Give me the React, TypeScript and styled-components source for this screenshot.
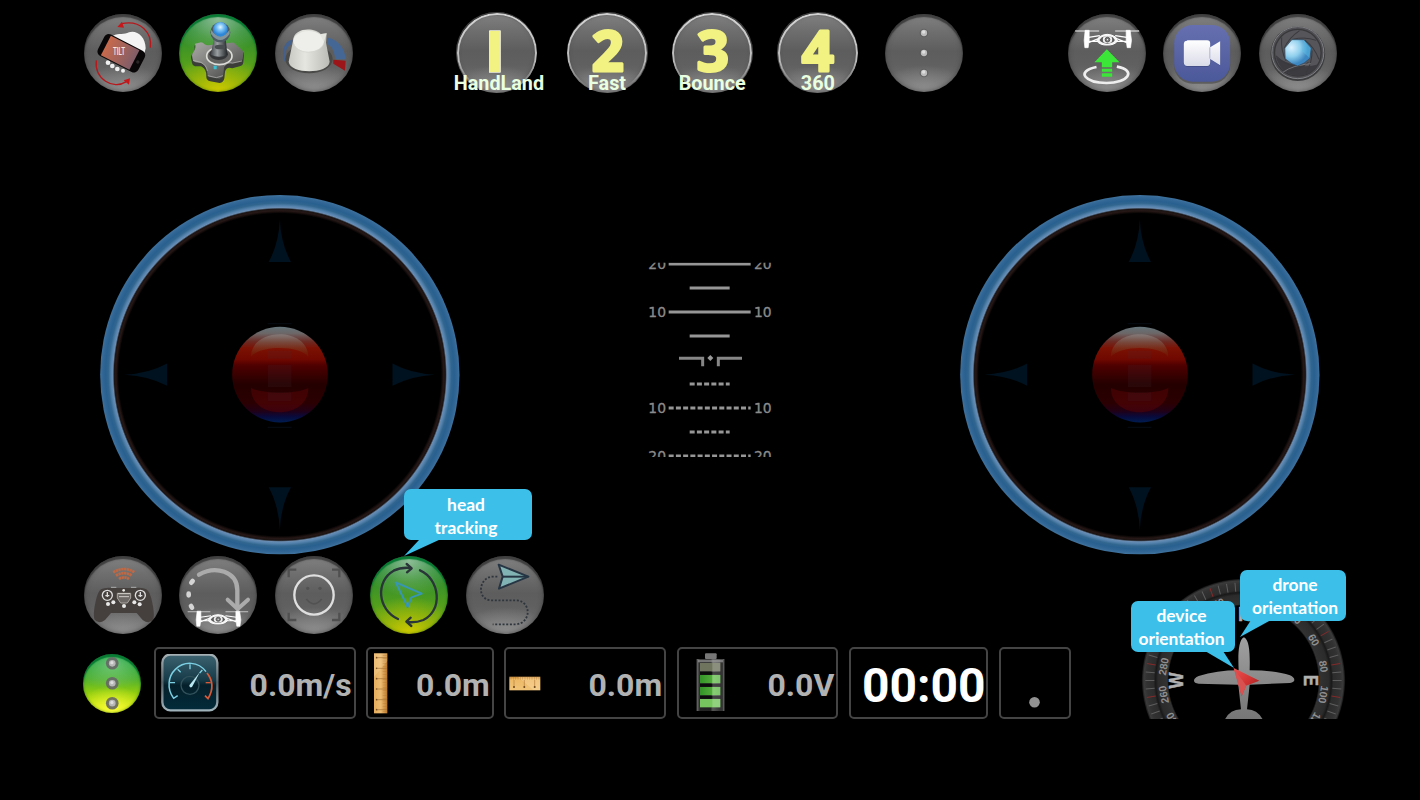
import React from "react";
import styled, { createGlobalStyle } from "styled-components";

const GlobalStyle = createGlobalStyle`
  * { box-sizing: border-box; }
  html, body { margin: 0; padding: 0; background: #000; overflow: hidden; }
`;

/* ---------- layout ---------- */

const Screen = styled.main`
  position: relative;
  display: flex;
  flex-direction: column;
  width: 1420px;
  height: 800px;
  overflow: hidden;
  background: #000;
  font-family: Roboto, "Liberation Sans", sans-serif;
`;

const TopBar = styled.header`
  display: grid;
  grid-template-columns: 372.5px 611.6px 1fr;
  height: 195px;
  padding: 13.7px 0 0 83.5px;
  flex: none;
`;

const OrbRow = styled.div<{ $indent?: number }>`
  display: flex;
  align-items: flex-start;
  gap: 17.5px;
  margin-left: ${(p) => p.$indent ?? 0}px;
`;

const PresetRow = styled(OrbRow)`
  gap: 24.4px;
`;

const Sticks = styled.section`
  display: flex;
  justify-content: space-between;
  align-items: flex-start;
  height: 361px;
  padding: 0 100px;
  flex: none;
`;

const AttitudeSlot = styled.div`
  padding-top: 55px;
`;

const Bottom = styled.section`
  display: flex;
  align-items: flex-start;
`;

const Controls = styled.div`
  display: flex;
  flex-direction: column;
  width: 1037.5px;
  margin-left: 82.5px;
  margin-top: -0.3px;
  gap: 13.6px;
`;

const StatusRow = styled.div`
  display: flex;
  align-items: center;
  gap: 10.6px;
`;

const CompassSlot = styled.div`
  padding-top: 4px;
`;

/* ---------- parts ---------- */

type Tone = "grey" | "green" | "lime";

const fills: Record<Tone, string> = {
  grey: `radial-gradient(ellipse 60% 34% at 50% 100%, #909090 0%, rgba(130,130,130,0) 100%),
    linear-gradient(180deg, #828282 0%, #6f6f6f 22%, #5d5d5d 48%, #606060 65%, #777 100%)`,
  green: `radial-gradient(ellipse 62% 46% at 50% 6%, rgba(185,210,185,.75) 0%, rgba(140,190,130,.35) 60%, rgba(120,180,90,0) 100%),
    radial-gradient(ellipse 62% 48% at 50% 100%, #d0cb00 0%, rgba(190,195,0,.6) 45%, rgba(150,190,0,0) 100%),
    linear-gradient(180deg, #0a7c38 0%, #3a9228 38%, #55a01c 65%, #80aa10 100%)`,
  lime: `radial-gradient(ellipse 60% 42% at 50% 18%, rgba(160,220,160,.6) 0%, rgba(150,210,140,0) 100%),
    radial-gradient(ellipse 60% 42% at 50% 96%, #fbff3a 0%, rgba(220,235,10,0) 100%),
    linear-gradient(180deg, #009838 0%, #4fb030 42%, #8fcc10 65%, #d8e800 100%)`,
};

const Orb = styled.div<{ $tone?: Tone; $size?: number; $after?: number }>`
  position: relative;
  flex: none;
  width: ${(p) => p.$size ?? 78}px;
  height: ${(p) => p.$size ?? 78}px;
  margin-right: ${(p) => p.$after ?? 0}px;
  border-radius: 50%;
  background: ${(p) => fills[p.$tone ?? "grey"]};
  box-shadow: ${(p) =>
    p.$tone === "green" || p.$tone === "lime"
      ? "inset 0 3px 1px #087a33, inset 0 0 3px rgba(0,80,20,.6)"
      : "inset 0 3px 1px rgba(50,50,50,.75), inset 0 0 5px rgba(60,60,60,.8)"};
`;

const PresetOrb = styled(Orb)`
  width: 81px;
  height: 81px;
  margin-top: -1.5px;

  &::after {
    content: "";
    position: absolute;
    inset: 0.5px;
    border-radius: 50%;
    border: 2.5px solid #d4d4d4;
    mask-image: linear-gradient(180deg, #000 0%, rgba(0, 0, 0, 0.8) 60%, transparent 95%);
  }
`;

const PresetLabel = styled.span<{ $shift: number }>`
  position: absolute;
  z-index: 1;
  left: 50%;
  top: 59.4px;
  transform: translateX(calc(-50% + ${(p) => p.$shift}px));
  font: 700 19.8px/24px Roboto, sans-serif;
  white-space: nowrap;
  color: #e9ffe0;
`;

const Icon = styled.svg`
  display: block;
  width: 100%;
  height: 100%;
  overflow: visible;
`;

const StickSvg = styled.svg`
  display: block;
  width: 360px;
  height: 360px;
`;

const Box = styled.div<{ $w: number }>`
  display: flex;
  align-items: center;
  justify-content: space-between;
  flex: none;
  width: ${(p) => p.$w}px;
  height: 72px;
  padding-right: 2px;
  border: 2px solid #444;
  border-radius: 5px;
`;

const Value = styled.span`
  padding-top: 4px;
  font: 700 32px/40px Roboto, sans-serif;
  color: #b2b2b2;
`;

const Clock = styled.span`
  width: 100%;
  padding: 5px 0 0 11px;
  text-align: center;
  font: 700 48px/60px Roboto, sans-serif;
  color: #fff;
`;

const Glyph = styled.svg<{ $w: number; $h: number; $ml?: number }>`
  display: block;
  flex: none;
  width: ${(p) => p.$w}px;
  height: ${(p) => p.$h}px;
  margin-left: ${(p) => p.$ml ?? 0}px;
`;

const Bubble = styled.div<{ $x: number; $y: number; $w: number; $pad: number }>`
  position: absolute;
  z-index: 3;
  left: ${(p) => p.$x}px;
  top: ${(p) => p.$y}px;
  width: ${(p) => p.$w}px;
  height: 51px;
  padding: ${(p) => p.$pad}px 0 0;
  border-radius: 7px;
  background: #3cc0ea;
  color: #fff;
  text-align: center;
  font: 700 17.4px/23px Lato, sans-serif;
  white-space: pre;
`;

const CalloutText = styled.div<{ $nudge: number }>`
  margin-left: ${(p) => p.$nudge * 2}px;
`;

const Tail = styled.svg`
  position: absolute;
  left: 0;
  top: 0;
  width: 1px;
  height: 1px;
  overflow: visible;
`;

/* ---------- top icons ---------- */

const TiltIcon = () => (
  <Icon viewBox="41 41 234 234">
    <g fill="none" stroke="#b8171b" strokeWidth="4">
      <path d="M240 142C246 96 210 58 154 70" />
      <path d="M78 180C72 236 128 270 168 244" />
    </g>
    <path d="M141 80l14-16 6 18zM179 234l-3 19-16-13z" fill="#c8171b" />
    <path d="M128 106c18-8 34-2 48-10 22-8 50 12 50 48l-4 16-96-46z" fill="#f4f4f4" />
    <g fill="#f0f0f0">
      <circle cx="113" cy="187" r="7" /><circle cx="126" cy="197" r="7" />
      <circle cx="141" cy="206" r="7" /><circle cx="158" cy="211" r="6" />
    </g>
    <g transform="rotate(27 153 159)">
      <rect x="85" y="123" width="136" height="72" rx="15" fill="#090607" />
      <rect x="101" y="126" width="96" height="66" fill="url(#tiltScreen)" />
      <circle cx="209" cy="160" r="5" fill="#292425" />
    </g>
    <defs>
      <linearGradient id="tiltScreen"><stop stopColor="#c76a4c" /><stop offset="1" stopColor="#805d68" /></linearGradient>
    </defs>
    <text x="146" y="165" textAnchor="middle" textLength="36" lengthAdjust="spacingAndGlyphs" fontFamily="Roboto" fontWeight="500" fontSize="30" fill="#f6eae4">TILT</text>
  </Icon>
);

const JoystickIcon = () => (
  <Icon viewBox="328 41 234 234">
    <defs>
      <linearGradient id="metal" x2="1" y2="1"><stop stopColor="#a9a9a6" /><stop offset=".45" stopColor="#7d7d7b" /><stop offset="1" stopColor="#3e3e3d" /></linearGradient>
      <linearGradient id="shaft"><stop stopColor="#3c4145" /><stop offset=".4" stopColor="#9a9fa2" /><stop offset="1" stopColor="#222628" /></linearGradient>
      <radialGradient id="knob" cx=".5" cy=".35"><stop stopColor="#e4f6ff" /><stop offset=".45" stopColor="#7cc3f5" /><stop offset="1" stopColor="#2e88d8" /></radialGradient>
    </defs>
    <path d="M376 134L392 130Q398 129 402 134Q408 141 420 138L484 130Q492 128 498 134L518 152Q524 158 523 164L521 186Q520 196 510 198L488 204Q470 198 466 214L464 234Q462 246 450 248L422 243Q410 240 410 230Q412 206 394 198L376 198Q368 196 367 188L364 172Q364 166 368 160Q378 148 374 139z" fill="#3a3d38" />
    <path d="M376 130L394 126Q400 126 404 131Q410 137 422 134L484 127Q492 126 497 131L517 149Q522 154 521 161L519 176Q517 184 508 186L488 190Q468 186 463 202L461 224Q459 233 450 235L424 231Q413 229 413 219Q413 197 394 188L378 186Q370 184 369 177L367 166Q367 160 371 155Q380 144 376 130z" fill="url(#metal)" />
    <path d="M370 180l24 6q16 8 19 26M465 196q8-12 24-8l28-6M414 226l26 6 20-6" stroke="#b7b7b3" strokeWidth="2" fill="none" />
    <ellipse cx="449" cy="167" rx="38" ry="26" fill="#626260" stroke="#dcdcd9" strokeWidth="5" />
    <ellipse cx="447" cy="162" rx="28" ry="17" fill="#343638" />
    <path d="M435 105h32l6 58q-24 12-50 0z" fill="url(#shaft)" />
    <ellipse cx="451" cy="140" rx="16" ry="7" fill="#484d50" />
    <circle cx="452" cy="96" r="30" fill="#4d5a62" />
    <path d="M424 88q28 38 56 0v13q-28 36-56 0z" fill="#84949b" />
    <circle cx="452" cy="87" r="22" fill="url(#knob)" />
    <rect x="432" y="196" width="9" height="11" rx="2" fill="#34c2d8" />
  </Icon>
);

const DialIcon = () => (
  <Icon viewBox="615 41 234 234">
    <defs>
      <linearGradient id="dialSide"><stop stopColor="#c8c9c3" /><stop offset=".4" stopColor="#e6e6e1" /><stop offset="1" stopColor="#b9bbb4" /></linearGradient>
    </defs>
    <path d="M644 184C631 144 648 120 668 118L664 132C648 141 643 158 649 182z" fill="#43618c" />
    <path d="M772 112C804 116 824 144 828 177L796 177C792 150 784 136 772 132z" fill="#456796" />
    <path d="M790 178l37 3-2 30-35-21z" fill="#9c1518" />
    <ellipse cx="717" cy="176" rx="71" ry="43" fill="#4a4a49" />
    <path d="M669 122C670 78 738 82 752 101l18-2-2 28 11 57C776 222 660 222 656 184z" fill="url(#dialSide)" />
    <ellipse cx="716" cy="123" rx="46" ry="31" fill="#eeeeea" />
    <path d="M750 102l20-3-8 26z" fill="#e4e5df" />
    <path d="M671 130q7 24 44 26 38-3 47-27" fill="none" stroke="#d4d5cf" strokeWidth="2" />
  </Icon>
);

const DotsIcon = () => (
  <Icon viewBox="555 41 234 234">
    {[98, 158, 218].map((y) => (
      <g key={y}>
        <circle cx="672" cy={y} r="13" fill="#555" opacity=".6" />
        <circle cx="672" cy={y} r="9.5" fill="#bcbcbc" />
        <circle cx="671" cy={y - 3} r="5" fill="#dedede" />
      </g>
    ))}
  </Icon>
);

/* front view of a quadcopter, drawn in a 192 x 60 area */
const Drone = () => (
  <g stroke="#fff" fill="none">
    <path d="M0 6h72M120 6h72" strokeWidth="4" stroke="#c4c4c4" />
    <path d="M30 4h12v30l-3 22h-10l-2-22zM153 4h12l4 30-3 22h-10l-3-22z" fill="#fff" strokeWidth="2" />
    <path d="M40 25L74 20M40 41L74 27M155 25L120 20M155 41L120 27M40 37H74M155 37H120" strokeWidth="4" />
    <path d="M72 24q24-16 49 0l6 12q-10 13-31 12-21 1-31-12z" fill="#f5f5f5" strokeWidth="3" />
    <path d="M80 25q16-6 33 0l6 8q-4 10-23 11-17-1-23-11z" fill="#5c5c5c" stroke="none" />
    <rect x="83" y="22" width="28" height="20" rx="9" fill="#eee" stroke="none" />
    <circle cx="97" cy="32" r="7" fill="#777" stroke="#555" strokeWidth="3" />
    <circle cx="97" cy="32" r="2" fill="#fff" stroke="none" />
  </g>
);

const TakeoffIcon = () => (
  <Icon viewBox="37.500 41 234 234">
    <g transform="translate(59 86)"><Drone /></g>
    <path d="M123 200c-66 14-32 48 30 48 65 0 92-38 31-49" fill="none" stroke="#eee" strokeWidth="8" />
    <path d="M154 147l38 39h-22v15h-31v-15h-22zM139 205h31v9h-31zM139 219h31v10h-31z" fill="#3be639" />
  </Icon>
);

const VideoIcon = () => (
  <Icon viewBox="323.500 41 234 234">
    <defs>
      <linearGradient id="vid" x2="0" y2="1"><stop stopColor="#6670b0" /><stop offset="1" stopColor="#4b5899" /></linearGradient>
      <linearGradient id="cam" x2="0" y2="1"><stop stopColor="#fff" /><stop offset="1" stopColor="#d9dbe8" /></linearGradient>
    </defs>
    <rect x="357" y="79" width="168" height="171" rx="55" fill="#4d4d4f" opacity=".7" />
    <rect x="357" y="74" width="168" height="170" rx="55" fill="url(#vid)" />
    <path d="M396 124h60q9 0 9 9v10l30-19v72l-30-19v11q0 11-9 11h-60q-9 0-9-11v-55q0-9 9-9z" fill="#34406f" opacity=".6" />
    <path d="M396 120h60q9 0 9 9v12l30-18v72l-30-19v10q0 11-9 11h-60q-10 0-10-11v-55q0-10 10-10z" fill="url(#cam)" />
    <path d="M464 141v34" stroke="#aeb4d0" strokeWidth="3" />
  </Icon>
);

const ShutterIcon = () => (
  <Icon viewBox="610.500 41 234 234">
    <defs>
      <radialGradient id="lens" cx=".25" cy=".3" r=".85"><stop stopColor="#dcf2ff" /><stop offset=".4" stopColor="#8fd0ee" /><stop offset=".75" stopColor="#3c86c0" /><stop offset="1" stopColor="#3a86c4" /></radialGradient>
    </defs>
    <circle cx="727" cy="160" r="82" fill="#3d3d3f" />
    <circle cx="727" cy="157" r="78" fill="#505054" stroke="#808184" strokeWidth="3" />
    <circle cx="727" cy="157" r="70" fill="#55555a" stroke="#38383b" strokeWidth="4" />
    <path d="M661 170q66 40 128 22-20 34-62 34-50-2-66-56z" fill="#3c3c40" />
    <g stroke="#3a3a3e" strokeWidth="3" fill="none">
      {[0, 51.4, 102.8, 154.2, 205.6, 257, 308.4].map((a) => (
        <path key={a} d="M711 117Q745 108 782 120" transform={`rotate(${a} 727 157)`} />
      ))}
    </g>
    <path d="M682 216Q712 194 766 190" stroke="#8a8a8e" strokeWidth="2" fill="none" />
    <path d="M709 118h36l22 25-4 31-17 14-20 9-19-8-18-14-1-32z" fill="url(#lens)" stroke="#2e4960" strokeWidth="2" />
    <path d="M745 119l21 24-4 30-22-20z" fill="#5cc4e8" opacity=".45" />
  </Icon>
);

/* ---------- mode icons ---------- */

const GamepadIcon = () => (
  <Icon viewBox="41 228 234 234">
    <g fill="none" stroke="#c9683f" strokeWidth="8" strokeDasharray="7 1.500" opacity=".9">
      <path d="M129 277q32-20 64 0" /><path d="M137 287q24-15 48 0" /><path d="M146 297q15-10 30 0" />
    </g>
    <path d="M92 328q10-6 34-4h68q24-2 34 4 10 5 17 36 9 40 4 54-12 16-32 2l-18-21h-77l-18 21q-20 14-32-2-5-14 4-54 7-31 16-36z" fill="#45403d" />
    <circle cx="111" cy="346" r="15" fill="#45403d" stroke="#ddd" strokeWidth="4" />
    <circle cx="210" cy="346" r="15" fill="#45403d" stroke="#ddd" strokeWidth="4" />
    <path d="M111 336v15M105 347h12M210 336v15M204 347h12" stroke="#ddd" strokeWidth="4" />
    <path d="M141 340h40v14l-10 15h-20l-10-15z" fill="#6d6966" stroke="#aaa5a1" strokeWidth="3" />
    <path d="M143 341h36M146 350h30" stroke="#d0ccc9" strokeWidth="3" />
    <g fill="#e8e8e8"><circle cx="113" cy="372" r="6" /><circle cx="129" cy="367" r="6" /><circle cx="161" cy="378" r="6" /><circle cx="192" cy="367" r="6" /><circle cx="208" cy="373" r="6" /><circle cx="160" cy="331" r="4" /></g>
    <path d="M122 322h16M182 322h16" stroke="#aaa" strokeWidth="3" />
  </Icon>
);

const ReturnIcon = () => (
  <Icon viewBox="328 228 234 234">
    <path d="M388 284C438 256 502 274 503 330V384" fill="none" stroke="#ababab" strokeWidth="13" strokeLinecap="round" />
    <path d="M474 359l30 28 31-28" fill="none" stroke="#ababab" strokeWidth="12" strokeLinecap="round" />
    <g stroke="#d4d4d4" strokeWidth="14" strokeLinecap="round"><path d="M369 303l-4 5M357 341v5M364 378l3 5" /></g>
    <g transform="translate(354 390) scale(.945 .87)"><Drone /></g>
  </Icon>
);

const FaceIcon = () => (
  <Icon viewBox="615 228 234 234">
    <g fill="none" stroke="#505050" strokeWidth="7"><path d="M656 292V269h23M786 269h22v23M808 398v22h-22M679 420h-23v-22" /></g>
    <circle cx="732" cy="345" r="59" fill="none" stroke="#dfdfdf" strokeWidth="7" />
    <g fill="#525252"><circle cx="713" cy="325" r="5" /><circle cx="750" cy="325" r="5" /></g>
    <path d="M709 357q23 29 46 0" fill="none" stroke="#525252" strokeWidth="5" />
  </Icon>
);

const TrackingIcon = () => (
  <Icon viewBox="901 228 234 234">
    <g fill="none" stroke="#293538" strokeWidth="7" strokeLinecap="round" strokeLinejoin="round">
      <path d="M985 417C924 390 916 304 972 272Q994 261 1024 264" />
      <path d="M1011 252l15 13-14 12" />
      <path d="M1051 271C1112 298 1120 392 1061 420Q1038 429 1013 426" />
      <path d="M1023 413l-13 12 15 13" />
    </g>
    <path d="M978 307l78 34-31 11-11 29z" fill="none" stroke="#3795b5" strokeWidth="6" strokeLinejoin="round" />
  </Icon>
);

const RouteIcon = () => (
  <Icon viewBox="1188 228 234 234">
    <path d="M1282 290h-14C1228 291 1218 354 1260 361H1342C1386 368 1382 430 1338 433H1268" fill="none" stroke="#2f353d" strokeWidth="5.500" strokeDasharray="6 5" />
    <path d="M1286 254l89 36-88 36 11-36z" fill="#82b3b4" stroke="#263543" strokeWidth="6" strokeLinejoin="round" />
    <path d="M1298 290h77" stroke="#263543" strokeWidth="6" />
  </Icon>
);

/* ---------- joystick pad ---------- */

const Stick = ({ id }: { id: string }) => (
  <StickSvg viewBox="30 30 1080 1080">
    <defs>
      <radialGradient id={`${id}-ring`} gradientUnits="userSpaceOnUse" cx="569.500" cy="569" r="540">
        <stop offset=".895" stopColor="#000" />
        <stop offset=".91" stopColor="#251715" />
        <stop offset=".92" stopColor="#1c1514" />
        <stop offset=".928" stopColor="#6a8db2" />
        <stop offset=".938" stopColor="#5583ae" />
        <stop offset=".953" stopColor="#31668f" />
        <stop offset=".968" stopColor="#28608f" />
        <stop offset=".985" stopColor="#326796" />
        <stop offset="1" stopColor="#42749e" />
      </radialGradient>
      <linearGradient id={`${id}-ball`} x2="0" y2="1">
        <stop offset="0" stopColor="#64757c" />
        <stop offset=".07" stopColor="#6d6666" />
        <stop offset=".15" stopColor="#6b2c26" />
        <stop offset=".22" stopColor="#7c1204" />
        <stop offset=".34" stopColor="#700800" />
        <stop offset=".4" stopColor="#500000" />
        <stop offset=".6" stopColor="#240000" />
        <stop offset=".8" stopColor="#2b0002" />
        <stop offset=".88" stopColor="#210016" />
        <stop offset=".94" stopColor="#080b3c" />
        <stop offset="1" stopColor="#001d52" />
      </linearGradient>
      <linearGradient id={`${id}-gloss`} x2="0" y2="1">
        <stop stopColor="#8d8484" stopOpacity=".7" />
        <stop offset="1" stopColor="#6a2a00" stopOpacity=".3" />
      </linearGradient>
    </defs>
    <circle cx="569.500" cy="569" r="539" fill={`url(#${id}-ring)`} />
    {[0, 90, 180, 270].map((a) => (
      <path key={a} d="M569.500 104Q573 176 603 231H536Q566 176 569.500 104z" fill="#00121f" transform={`rotate(${a} 569.500 569)`} />
    ))}
    <path d="M533 416h72M533 727h72" stroke="#040a10" strokeWidth="4" />
    <circle cx="570" cy="569" r="143.500" fill={`url(#${id}-ball)`} />
    <path d="M483 515C484 425 654 425 655 515C630 480 510 480 483 515z" fill={`url(#${id}-gloss)`} />
    <path d="M483 609C520 628 620 628 655 609C656 706 482 706 483 609z" fill="#5c0306" opacity=".5" />
    <path d="M534 497h70v24h-70zM534 540h70v66h-70zM534 622h70v27h-70z" fill="#442a38" opacity=".16" />
  </StickSvg>
);

/* ---------- attitude ladder ---------- */

const Attitude = () => (
  <Glyph $w={160} $h={220} viewBox="0 0 480 660">
    <defs><clipPath id="ladder"><rect x="0" y="38" width="480" height="583" /></clipPath></defs>
    <g clipPath="url(#ladder)" stroke="#969696" strokeWidth="8.500" fill="none">
      <path d="M116 42h246M179 114h120M116 186h246M179 258h120" />
      <path d="M179 402h120M116 474h246M179 546h120M116 618h246" strokeDasharray="15 6.700" />
      <path d="M147 325h71v24M336 325h-71v24" stroke="#868686" strokeWidth="9" />
      <path d="M241 315l9 9-9 9-9-9z" fill="#999" stroke="none" />
      <g fill="#8a8a8a" stroke="#8a8a8a" strokeWidth="1" fontFamily="DejaVu Sans" fontSize="44">
        {[["20", 57], ["10", 201], ["10", 489], ["20", 633]].map(([t, y]) => (
          <React.Fragment key={y}>
            <text x="55" y={y} textLength="53" lengthAdjust="spacingAndGlyphs">{t}</text>
            <text x="372" y={y} textLength="53" lengthAdjust="spacingAndGlyphs">{t}</text>
          </React.Fragment>
        ))}
      </g>
    </g>
  </Glyph>
);

/* ---------- status icons ---------- */

const Gauge = () => (
  <Glyph $w={58} $h={58} $ml={5} viewBox="274 42 174 174">
    <defs>
      <linearGradient id="gBody" x2="0" y2="1"><stop stopColor="#3d6370" /><stop offset=".45" stopColor="#173b48" /><stop offset=".55" stopColor="#05202b" /><stop offset="1" stopColor="#022b3a" /></linearGradient>
      <linearGradient id="gRim" x2="0" y2="1"><stop stopColor="#a5b0b4" /><stop offset=".5" stopColor="#56666d" /><stop offset="1" stopColor="#a0b2ba" /></linearGradient>
    </defs>
    <rect x="278" y="44" width="165" height="167" rx="24" fill="url(#gBody)" stroke="url(#gRim)" strokeWidth="7" />
    <path d="M324 167l-12 8C290 145 296 108 317 88C344 62 386 64 409 95" fill="none" stroke="#7bd0e4" strokeWidth="4.500" />
    <path d="M412 99C431 123 430 151 415 176l-9-9" fill="none" stroke="#d85b39" strokeWidth="5" />
    <path d="M301 128h15M324 88l9 9M361 73v15M398 90l-8 9" stroke="#7bd0e4" strokeWidth="4" />
    <path d="M423 128h-15" stroke="#d85b39" strokeWidth="4" />
    <circle cx="361" cy="136" r="27" fill="none" stroke="#31515b" strokeWidth="4" />
    <path d="M391 96L367 141q-8 4-8-5z" fill="#b9e8f2" />
  </Glyph>
);

const Ruler = () => (
  <Glyph $w={15} $h={61} $ml={4.5} viewBox="908 38 45 183">
    <defs><linearGradient id="wood"><stop stopColor="#e6ad5c" /><stop offset=".5" stopColor="#edbc72" /><stop offset="1" stopColor="#bd7b2e" /></linearGradient></defs>
    <rect x="911" y="39" width="40" height="180" fill="url(#wood)" />
    <path d="M911 110L951 62V39h-40z" fill="#f8dca6" opacity=".3" />
    <path d="M944 45v170" stroke="#af6d23" strokeWidth="14" strokeDasharray="2 6" opacity=".35" />
    {[52, 84, 115, 146, 178, 208].map((y) => (
      <g key={y}><path d={`M921 ${y}h29`} stroke="#a87234" strokeWidth="2" /><circle cx="919" cy={y} r="2.500" fill="#7a5226" /></g>
    ))}
  </Glyph>
);

const ShortRuler = () => (
  <Glyph $w={32} $h={15} $ml={2.5} viewBox="57 110 96 45">
    <defs><linearGradient id="wood2" x2="0" y2="1"><stop stopColor="#c98d3e" /><stop offset=".2" stopColor="#edb966" /><stop offset="1" stopColor="#f0c478" /></linearGradient></defs>
    <rect x="58" y="112" width="93" height="41" fill="url(#wood2)" />
    <path d="M84 113h66v39h-20z" fill="#ffe6b8" opacity=".3" />
    <path d="M62 117h86" stroke="#a06826" strokeWidth="8" strokeDasharray="2 5" opacity=".4" />
    {[72, 103, 134].map((x) => (
      <g key={x}><path d={`M${x} 122v22`} stroke="#b57e3c" strokeWidth="2" /><circle cx={x} cy="143" r="3" fill="#6e471d" /></g>
    ))}
  </Glyph>
);

const Battery = () => (
  <Glyph $w={29} $h={60} $ml={17.5} viewBox="619 40 87 180">
    <defs>
      <linearGradient id="bat"><stop stopColor="#747474" /><stop offset=".12" stopColor="#242424" /><stop offset=".5" stopColor="#222" /><stop offset=".58" stopColor="#555" /><stop offset=".85" stopColor="#333" /><stop offset=".93" stopColor="#333" /><stop offset="1" stopColor="#777" /></linearGradient>
      <linearGradient id="cell"><stop stopColor="#339326" /><stop offset=".6" stopColor="#52ac3c" /><stop offset=".62" stopColor="#6cc055" /><stop offset="1" stopColor="#5fb848" /></linearGradient>
    </defs>
    <rect x="646" y="41" width="35" height="17" rx="3" fill="#777" />
    <path d="M621 58h83v156h-83z" fill="url(#bat)" />
    <path d="M631 70h61v25h-61z" fill="#6e745e" />
    <path d="M631 106h61v25h-61zM631 142h61v25h-61z" fill="url(#cell)" />
    <path d="M631 178h61v25h-61z" fill="#76c55e" />
    <path d="M631 96h61v9h-61zM631 132h61v9h-61zM631 168h61v9h-61z" fill="#080808" opacity=".85" />
    <path d="M668 60h24v143h-24z" fill="#fff" opacity=".2" />
    <path d="M625 60h75v8h-75z" fill="#999" opacity=".7" />
  </Glyph>
);

/* ---------- compass ---------- */

const CX = 370.5;
const CY = 361.5;
const marks = Array.from({ length: 72 }, (_, i) => i * 5);
const numbers = [20, 40, 60, 80, 100, 120, 240, 260, 280, 300, 320, 340];

const Compass = () => (
  <Glyph $w={240} $h={159.33} viewBox="0 0 720 478">
    <defs>
      <radialGradient id="dialRing" gradientUnits="userSpaceOnUse" cx={CX} cy={CY} r="305">
        <stop offset=".735" stopColor="#000" /><stop offset=".75" stopColor="#323232" /><stop offset=".84" stopColor="#2b2b2b" />
        <stop offset=".865" stopColor="#191919" /><stop offset=".885" stopColor="#2c2c2c" /><stop offset=".95" stopColor="#323232" />
        <stop offset=".98" stopColor="#3b3b3b" /><stop offset="1" stopColor="#111" />
      </radialGradient>
      <linearGradient id="plane" x2="0" y2="1"><stop stopColor="#a0a0a0" /><stop offset="1" stopColor="#767676" /></linearGradient>
      <linearGradient id="arrow" x2="1" y2="1"><stop stopColor="#f05050" /><stop offset=".5" stopColor="#d23434" /><stop offset="1" stopColor="#8d1a1a" /></linearGradient>
    </defs>
    <circle cx={CX} cy={CY} r="305" fill="url(#dialRing)" />
    {marks.map((a) => (
      <path key={a} d={`M${CX} 67v27`} stroke={a % 20 === 0 ? "#842a2a" : "#5e5e5e"} strokeWidth="3" transform={`rotate(${a} ${CX} ${CY})`} />
    ))}
    <g fill="#8e8e8e" fontFamily="Liberation Sans" fontWeight="700" fontSize="32" textAnchor="middle">
      {numbers.map((n) => (
        <text key={n} x={CX} y={CY - 232} transform={`rotate(${n} ${CX} ${CY})`}>{n}</text>
      ))}
    </g>
    <g fill="#b0b0b0" stroke="#b0b0b0" strokeWidth="1.500" fontFamily="Liberation Sans" fontWeight="700" fontSize="60" textAnchor="middle">
      <text x={CX + 5} y={CY - 179}>N</text>
      <text x={CX} y={CY - 181} transform={`rotate(90 ${CX} ${CY})`} textLength="34" lengthAdjust="spacingAndGlyphs">E</text>
      <text x={CX} y={CY - 181} transform={`rotate(270 ${CX} ${CY})`} textLength="48" lengthAdjust="spacingAndGlyphs">W</text>
    </g>
    <path d="M372 232C390 240 390 290 389 331Q470 331 510 346 523 352 523 360 523 366 510 369L389 374 381 448Q412 449 428 478H315Q330 449 363 448L355 374 236 371Q222 369 222 362 222 354 236 348 290 331 356 331C354 290 354 240 372 232z" fill="url(#plane)" />
    <path d="M341 324l77 38-40 15-13 32z" fill="url(#arrow)" />
    <path d="M341 324l38 53-14 32z" fill="#d85252" />
  </Glyph>
);

/* ---------- composition ---------- */

const presets = [
  { n: "1", label: "HandLand", shift: 2.4, after: 5.2 },
  { n: "2", label: "Fast", shift: 0, after: 0 },
  { n: "3", label: "Bounce", shift: -0.3, after: 0 },
  { n: "4", label: "360", shift: 0, after: 2.2 },
];

const Preset = ({ n, label, shift, after }: { n: string; label: string; shift: number; after: number }) => (
  <PresetOrb $after={after}>
    <Icon viewBox="0 0 243 243">
      <defs><clipPath id="stem"><rect x="99" y="50" width="40" height="140" /></clipPath></defs>
      <text
        x={n === "1" ? 104 : 122}
        y={n === "1" ? 180 : 178}
        textAnchor="middle"
        fontFamily="Open Sans"
        fontWeight={n === "1" ? 800 : 700}
        fontSize="168"
        fill="#f2f283"
        stroke={n === "1" ? "#eeeedc" : "#f2f283"}
        strokeWidth={n === "1" ? 5 : 9}
        strokeLinejoin="round"
        paintOrder="stroke"
        clipPath={n === "1" ? "url(#stem)" : undefined}
      >
        {n}
      </text>
    </Icon>
    <PresetLabel $shift={shift}>{label}</PresetLabel>
  </PresetOrb>
);

type CalloutProps = { x: number; y: number; w: number; nudge: number; pad: number; text: string; tail: string };

const Callout = ({ x, y, w, nudge, pad, text, tail }: CalloutProps) => (
  <Bubble $x={x} $y={y} $w={w} $pad={pad}>
    <Tail><path d={tail} fill="#3cc0ea" /></Tail>
    <CalloutText $nudge={nudge}>{text}</CalloutText>
  </Bubble>
);

export default function App() {
  return (
    <Screen>
      <GlobalStyle />
      <TopBar>
        <OrbRow>
          <Orb><TiltIcon /></Orb>
          <Orb $tone="green"><JoystickIcon /></Orb>
          <Orb><DialIcon /></Orb>
        </OrbRow>
        <PresetRow>
          {presets.map((p) => <Preset key={p.n} {...p} />)}
          <Orb><DotsIcon /></Orb>
        </PresetRow>
        <OrbRow>
          <Orb><TakeoffIcon /></Orb>
          <Orb><VideoIcon /></Orb>
          <Orb><ShutterIcon /></Orb>
        </OrbRow>
      </TopBar>

      <Sticks>
        <Stick id="left" />
        <AttitudeSlot><Attitude /></AttitudeSlot>
        <Stick id="right" />
      </Sticks>

      <Bottom>
        <Controls>
          <OrbRow $indent={1}>
            <Orb><GamepadIcon /></Orb>
            <Orb><ReturnIcon /></Orb>
            <Orb><FaceIcon /></Orb>
            <Orb $tone="green"><TrackingIcon /></Orb>
            <Orb><RouteIcon /></Orb>
          </OrbRow>
          <StatusRow>
            <Orb $tone="lime" $size={58.5} $after={2.4}>
              <Icon viewBox="38 42 176 176">
                {[70, 130, 190].map((y) => (
                  <g key={y}>
                    <circle cx="126" cy={y} r="19" fill="#666" opacity=".9" />
                    <circle cx="126" cy={y} r="10" fill="#b8b8b8" />
                    <circle cx="125" cy={y - 2} r="5" fill="#ddd" />
                  </g>
                ))}
              </Icon>
            </Orb>
            <Box $w={201.6}><Gauge /><Value>0.0m/s</Value></Box>
            <Box $w={127.6}><Ruler /><Value>0.0m</Value></Box>
            <Box $w={161.8}><ShortRuler /><Value>0.0m</Value></Box>
            <Box $w={161.6}><Battery /><Value>0.0V</Value></Box>
            <Box $w={139.4}><Clock>00:00</Clock></Box>
            <Box $w={71.6}>
              <Glyph $w={68} $h={68} viewBox="0 0 68 68"><circle cx="33.500" cy="53.300" r="5.300" fill="#929292" /></Glyph>
            </Box>
          </StatusRow>
        </Controls>
        <CompassSlot><Compass /></CompassSlot>
      </Bottom>

      <Callout x={404} y={489} w={128} nudge={-2} pad={4} text={"head\ntracking"} tail="M15 51L0 67 37 50H15z" />
      <Callout x={1131.3} y={601} w={103.3} nudge={-1.5} pad={3} text={"device\norientation"} tail="M74 50L103 67 92 50z" />
      <Callout x={1240} y={570} w={106} nudge={2} pad={3} text={"drone\norientation"} tail="M11 50L0 67 31 50z" />
    </Screen>
  );
}
